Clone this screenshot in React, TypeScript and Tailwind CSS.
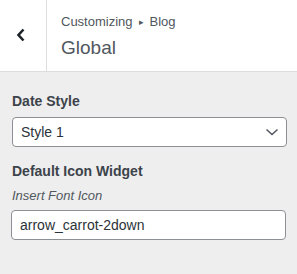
export default function App() {
  return (
    <div className="w-[297px] h-[274px] bg-[#eeeeee] font-['Liberation_Sans',Arial,sans-serif] text-[#1d2327]">
      {/* HEADER */}
      <div className="h-[72px] bg-white border-b border-[#dcdcde] flex">
        <div className="w-[47px] border-r border-[#dddddd] flex items-center justify-center">
          <svg width="12" height="16" viewBox="0 0 12 16" className="-mt-[1px] -ml-[4px]">
            <path d="M8.5 2.5 L3.5 8 L8.5 13.5" fill="none" stroke="#1d2327" strokeWidth="2.6" />
          </svg>
        </div>
        <div className="pl-[14px] pt-[13px] flex flex-col">
          <span className="text-[13px] leading-[18px] text-[#50575e]">
            Customizing<span className="text-[9px] relative -top-[1px] mx-[6px]">▸</span>Blog
          </span>
          <span className="text-[19px] leading-[26px] mt-[3px] text-[#50575e]">Global</span>
        </div>
      </div>

      {/* CONTROLS */}
      <div className="px-[12px] pt-[20px]">
        <div className="text-[14px] leading-[18px] font-bold text-[#3c434a]">Date Style</div>
        <div className="mt-[7px] h-[30px] w-[275px] bg-white border border-[#8c8f94] rounded-[4px] flex items-center justify-between pl-[8px] pr-[7px]">
          <span className="text-[14px] text-[#2c3338]">Style 1</span>
          <svg width="14" height="10" viewBox="0 0 14 10">
            <path d="M1.5 2.5 L7 7.5 L12.5 2.5" fill="none" stroke="#50575e" strokeWidth="1.5" />
          </svg>
        </div>
        <div className="mt-[15px] text-[14px] leading-[18px] font-bold text-[#3c434a]">Default Icon Widget</div>
        <div className="mt-[8px] text-[13px] leading-[16px] italic text-[#50575e]">Insert Font Icon</div>
        <div className="mt-[6px] h-[30px] w-[275px] -ml-[1px] bg-white border border-[#8c8f94] rounded-[4px] flex items-center pl-[8px]">
          <span className="text-[14px] text-[#2c3338]">arrow_carrot-2down</span>
        </div>
      </div>
    </div>
  );
}
